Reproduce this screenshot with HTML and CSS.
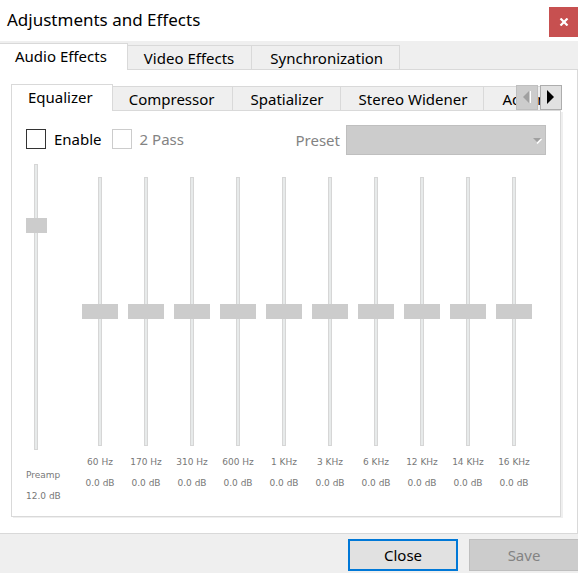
FILE: index.html
```html
<!DOCTYPE html>
<html lang="en">
<head>
<meta charset="utf-8">
<meta name="viewport" content="width=device-width, initial-scale=1">
<title>Adjustments and Effects</title>
<link rel="stylesheet" href="styles.css">
</head>
<body>
<div class="dialog">
  <header class="titlebar">
    <h1 class="title">Adjustments and Effects</h1>
    <button class="window-close" type="button" aria-label="Close window">
      <svg width="10" height="8" viewBox="0 0 10 8"><path d="M1.5 0.5L8.5 7.5M8.5 0.5L1.5 7.5" stroke="#fff" stroke-width="2.2"/></svg>
    </button>
  </header>

  <nav class="tabs tabs-main">
    <button class="tab tab-active" type="button">Audio Effects</button>
    <button class="tab" type="button">Video Effects</button>
    <button class="tab tab-wide" type="button">Synchronization</button>
    <span class="tab-rest"></span>
  </nav>

  <main class="page">
    <div class="group">
      <nav class="tabs tabs-sub">
        <button class="tab tab-active" type="button">Equalizer</button>
        <button class="tab" type="button">Compressor</button>
        <button class="tab tab-wide" type="button">Spatializer</button>
        <button class="tab tab-wide" type="button">Stereo Widener</button>
        <button class="tab tab-wide" type="button">Advanced</button>
      </nav>
      <div class="scrollers">
        <button class="scroller" type="button" disabled aria-label="Scroll tabs left">
          <svg width="20" height="23" viewBox="1 1 20 23"><path d="M14 6h1v12h-1z" fill="#fff"/><path d="M13 6v12L7 12z" fill="#a0a0a0"/></svg>
        </button>
        <button class="scroller" type="button" aria-label="Scroll tabs right">
          <svg width="20" height="23" viewBox="1 1 20 23"><path d="M7 5v14l7-7z" fill="#000"/></svg>
        </button>
      </div>

      <section class="panel">
        <div class="options">
          <label class="check"><input type="checkbox">Enable</label>
          <label class="check check-off"><input type="checkbox" disabled>2 Pass</label>
          <label class="preset" for="preset">Preset</label>
          <div class="select-wrap">
            <select id="preset" disabled></select>
            <svg class="arrow" width="9" height="6" viewBox="0 0 9 6"><path d="M4 5.5L8.5 1" stroke="#fff" stroke-width="1.5"/><path d="M0 0h8L4 4z" fill="#a0a0a0"/></svg>
          </div>
        </div>

        <div class="equalizer">
          <label class="preamp"><input type="range" min="-20" max="20" value="12" disabled><span>Preamp</span><span>12.0 dB</span></label>
          <div class="bands">
            <label class="band"><input type="range" min="-20" max="20" value="0" disabled><span>60 Hz</span><span>0.0 dB</span></label>
            <label class="band"><input type="range" min="-20" max="20" value="0" disabled><span>170 Hz</span><span>0.0 dB</span></label>
            <label class="band"><input type="range" min="-20" max="20" value="0" disabled><span>310 Hz</span><span>0.0 dB</span></label>
            <label class="band"><input type="range" min="-20" max="20" value="0" disabled><span>600 Hz</span><span>0.0 dB</span></label>
            <label class="band"><input type="range" min="-20" max="20" value="0" disabled><span>1 KHz</span><span>0.0 dB</span></label>
            <label class="band"><input type="range" min="-20" max="20" value="0" disabled><span>3 KHz</span><span>0.0 dB</span></label>
            <label class="band"><input type="range" min="-20" max="20" value="0" disabled><span>6 KHz</span><span>0.0 dB</span></label>
            <label class="band"><input type="range" min="-20" max="20" value="0" disabled><span>12 KHz</span><span>0.0 dB</span></label>
            <label class="band"><input type="range" min="-20" max="20" value="0" disabled><span>14 KHz</span><span>0.0 dB</span></label>
            <label class="band"><input type="range" min="-20" max="20" value="0" disabled><span>16 KHz</span><span>0.0 dB</span></label>
          </div>
        </div>
      </section>
    </div>
  </main>

  <footer class="actions">
    <button class="action action-default" type="button">Close</button>
    <button class="action" type="button" disabled>Save</button>
  </footer>
</div>
</body>
</html>
```
FILE: styles.css
```css
* { box-sizing: border-box; }

body {
  margin: 0;
  background: #efefef;
  color: #000;
  font: 15px/20px "Noto Sans", "Open Sans", sans-serif;
}

button, input, select { margin: 0; font: inherit; color: inherit; }
svg { display: block; }

.titlebar {
  display: flex;
  align-items: flex-start;
  justify-content: space-between;
  height: 41px;
  padding: 7px 0 0 7px;
  background: #fff;
}
.title { margin: 0; padding-top: 2px; font-size: 17px; line-height: 22px; font-weight: 400; }
.window-close {
  display: grid;
  place-items: center;
  width: 29px;
  height: 30px;
  padding: 0;
  border: 0;
  background: #c75050;
}

.tabs { display: flex; align-items: flex-end; overflow: hidden; }
.tab {
  flex: none;
  height: 25px;
  padding: 0 17px 0 16px;
  border: 1px solid #d9d9d9;
  border-left: 0;
  background: #efefef;
  line-height: 20px;
  white-space: nowrap;
}
.tab-wide { padding: 0 16px 0 18px; }
.tab-active {
  height: 27px;
  padding: 0 20px 2px 15px;
  border-bottom: 0;
  background: #fff;
}
.tabs-main { padding-top: 2px; }
.tab-rest { flex: 1; height: 1px; background: #d9d9d9; }

.page {
  padding: 14px 16px 16px 11px;
  border: solid #d9d9d9;
  border-width: 0 1px 1px 0;
  background: #fff;
}
.group { position: relative; }
.tabs-sub .tab-active { padding: 0 19px 2px 16px; border-left: 1px solid #d9d9d9; }
.scrollers { position: absolute; top: 1px; right: -1px; display: flex; gap: 2px; }
.scroller {
  display: grid;
  place-items: center;
  width: 22px;
  height: 25px;
  padding: 0;
  border: 1px solid #adadad;
  background: #e1e1e1;
}
.scroller:disabled { border-color: #bfbfbf; background: #ccc; }

.panel {
  padding: 14px 14px 9px;
  border: solid #d9d9d9;
  border-width: 0 1px 1px;
  box-shadow: 2px 1px #efefef;
}
.options { display: flex; align-items: center; }
.check { display: flex; align-items: center; gap: 8px; margin-right: 10px; padding-bottom: 2px; }
.check input {
  appearance: none;
  width: 20px;
  height: 20px;
  border: 1px solid #333;
  background: #fff;
}
.check-off, .preset { color: #838383; }
.check-off input { border-color: #ccc; }
.preset { margin-left: auto; padding-right: 6px; }
.select-wrap { position: relative; width: 200px; }
.select-wrap select {
  appearance: none;
  display: block;
  width: 100%;
  height: 30px;
  border: 1px solid #bfbfbf;
  border-radius: 0;
  background: #ccc;
  opacity: 1;
}
.arrow { position: absolute; top: 13px; right: 4px; }

.equalizer {
  display: flex;
  gap: 17px;
  padding-top: 9px;
  color: #787878;
  font: 9px/21px "DejaVu Sans", sans-serif;
  white-space: nowrap;
}
.preamp, .band { display: flex; flex-direction: column; align-items: center; }
.preamp { align-items: flex-start; width: 34px; }
.preamp span:first-of-type { margin-top: 15px; }
.band span:first-of-type { margin-top: 6px; }
.bands {
  flex: 1;
  display: grid;
  grid-template-columns: repeat(10, 1fr);
  align-items: start;
  margin-right: 9px;
  padding-top: 13px;
}
input[type="range"] {
  appearance: none;
  writing-mode: vertical-lr;
  direction: rtl;
  width: 36px;
  height: 269px;
  background:
    linear-gradient(#e7eaea, #e7eaea) 17px 1px / 2px calc(100% - 2px) no-repeat,
    linear-gradient(#d6d6d6, #d6d6d6) 16px 0 / 4px 100% no-repeat;
}
.preamp input[type="range"] {
  width: 21px;
  height: 286px;
  background-position: 9px 1px, 8px 0;
}
input[type="range"]::-webkit-slider-thumb {
  appearance: none;
  width: 36px;
  height: 15px;
  background: #ccc;
}
.preamp input[type="range"]::-webkit-slider-thumb { width: 21px; }

.actions { display: flex; justify-content: flex-end; gap: 11px; padding: 5px 0 2px; }
.action {
  width: 110px;
  height: 32px;
  padding: 0;
  border: 1px solid #bfbfbf;
  background: #ccc;
  color: #838383;
}
.action:last-child { margin-right: -1px; }
.action-default { border: 2px solid #0078d7; background: #e1e1e1; color: #000; }
.dialog { overflow: hidden; }
```
